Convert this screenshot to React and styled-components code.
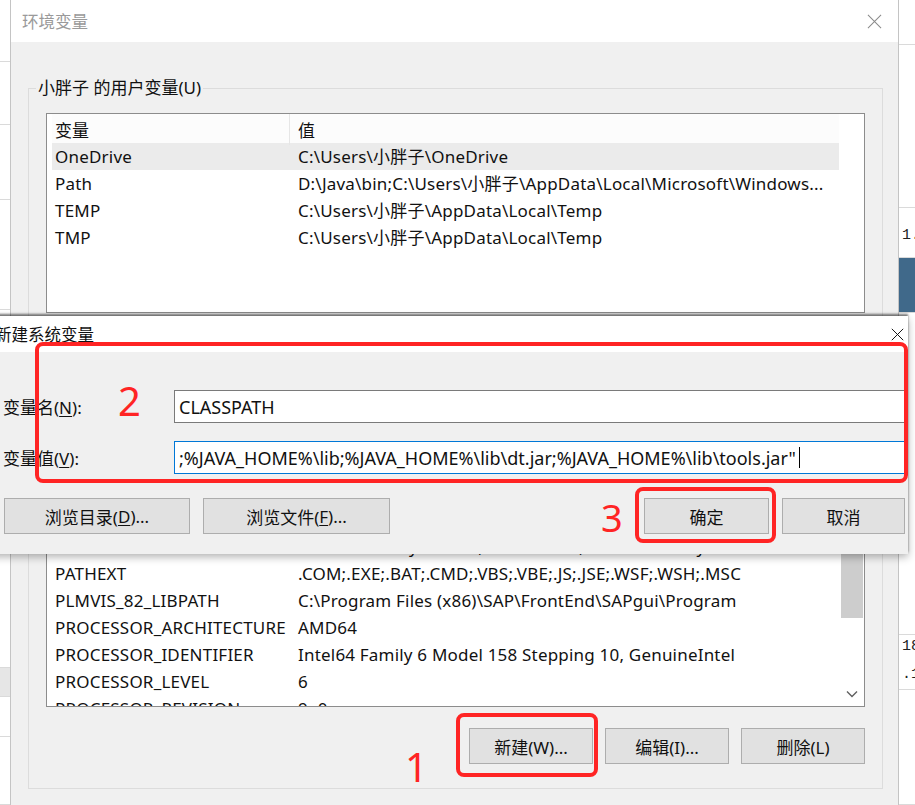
import React from "react";
import styled, { createGlobalStyle } from "styled-components";

const GlobalStyle = createGlobalStyle`
  html, body {
    margin: 0;
    padding: 0;
  }
  body {
    width: 915px;
    height: 805px;
    overflow: hidden;
    background: #fff;
    font-family: "Noto Sans", "Noto Sans CJK SC", sans-serif;
    color: #111;
  }
  * {
    box-sizing: border-box;
  }
`;

// 用户变量 / 系统变量 列表数据
const userVars = [
  { name: "OneDrive", value: "C:\\Users\\小胖子\\OneDrive", selected: true },
  { name: "Path", value: "D:\\Java\\bin;C:\\Users\\小胖子\\AppData\\Local\\Microsoft\\Windows..." },
  { name: "TEMP", value: "C:\\Users\\小胖子\\AppData\\Local\\Temp" },
  { name: "TMP", value: "C:\\Users\\小胖子\\AppData\\Local\\Temp" },
];

const systemVars = [
  { name: "JAVA_HOME", value: "D:\\Java" },
  { name: "NUMBER_OF_PROCESSORS", value: "12" },
  { name: "OS", value: "Windows_NT" },
  { name: "Path", value: "C:\\Windows\\system32;C:\\Windows;C:\\Windows\\System32\\Wbem" },
  { name: "PATHEXT", value: ".COM;.EXE;.BAT;.CMD;.VBS;.VBE;.JS;.JSE;.WSF;.WSH;.MSC" },
  { name: "PLMVIS_82_LIBPATH", value: "C:\\Program Files (x86)\\SAP\\FrontEnd\\SAPgui\\Program" },
  { name: "PROCESSOR_ARCHITECTURE", value: "AMD64" },
  { name: "PROCESSOR_IDENTIFIER", value: "Intel64 Family 6 Model 158 Stepping 10, GenuineIntel" },
  { name: "PROCESSOR_LEVEL", value: "6" },
  { name: "PROCESSOR_REVISION", value: "9e0a" },
];

// 背后那个程序露出来的两条边
const leftBands = [
  { h: 62 }, { h: 63 }, { h: 75 }, { h: 110 }, { h: 358 }, { h: 29, shade: true }, { h: 40 }, { h: 68 },
];

const rightBands = [
  { h: 45 }, { h: 163 }, { h: 50, text: "1.", pad: 18 }, { h: 55, blue: true }, { h: 322 },
  { h: 27, text: "18", pad: 2, bare: true }, { h: 28, text: ".1", pad: 3 }, { h: 115 },
];

const CloseIcon = ({ size, color, weight }) => (
  <svg width={size} height={size} viewBox="0 0 16 16">
    <path d="M1 1 L15 15 M15 1 L1 15" stroke={color} strokeWidth={weight} fill="none" />
  </svg>
);

const ChevronDown = () => (
  <svg width="12" height="8" viewBox="0 0 12 8">
    <path d="M1 1.5 L6 6.5 L11 1.5" stroke="#606060" strokeWidth="1.4" fill="none" />
  </svg>
);

const VarList = ({ rows, height, scroll }) => (
  <ListBox $h={height}>
    <ListBody>
      <HeaderRow>
        <HeaderCell $divider>变量</HeaderCell>
        <HeaderCell>值</HeaderCell>
      </HeaderRow>
      {rows.map((r) => (
        <Row key={r.name + r.value} $selected={r.selected}>
          <Cell>{r.name}</Cell>
          <Cell>{r.value}</Cell>
        </Row>
      ))}
    </ListBody>
    <Gutter>
      {scroll && (
        <>
          <ArrowBox />
          <Track>
            <Thumb $offset={72} $size={98} />
          </Track>
          <ArrowBox>
            <ChevronDown />
          </ArrowBox>
        </>
      )}
    </Gutter>
  </ListBox>
);

const App = () => {
  return (
    <>
      <GlobalStyle />
      <Desktop>
        <Strip $w={10}>
          {leftBands.map((b, i) => (
            <Band key={i} $h={b.h} $shade={b.shade} />
          ))}
        </Strip>
        <Strip $w={16}>
          {rightBands.map((b, i) => (
            <Band key={i} $h={b.h} $blue={b.blue} $pad={b.pad} $bare={b.bare}>
              {b.text}
            </Band>
          ))}
        </Strip>

        <Window>
          <TitleBar $h={42} $left={11} $right={16}>
            <WinTitle $dim>环境变量</WinTitle>
            <CloseIcon size={15} color="#8a8a8a" weight={1.1} />
          </TitleBar>
          <WindowBody>
            <Group>
              <Legend>小胖子 的用户变量(U)</Legend>
              <VarList rows={userVars} height={200} />
              <ButtonRow>
                <Button $w={124}>新建(N)...</Button>
                <Button $w={124}>编辑(E)...</Button>
                <Button $w={124}>删除(D)</Button>
              </ButtonRow>
            </Group>
            <Group $gap={10} $bottom={24}>
              <Legend>系统变量(S)</Legend>
              <VarList rows={systemVars} height={285} scroll />
              <ButtonRow $top={21}>
                <Button $w={124}>新建(W)...</Button>
                <Button $w={124}>编辑(I)...</Button>
                <Button $w={124}>删除(L)</Button>
              </ButtonRow>
            </Group>
          </WindowBody>
        </Window>

        <Dialog>
          <TitleBar $h={36} $left={5} $right={4}>
            <WinTitle>新建系统变量</WinTitle>
            <CloseIcon size={13} color="#111" weight={1.2} />
          </TitleBar>
          <DialogBody>
            <FieldRow>
              <FieldLabel>
                变量名(<u>N</u>):
              </FieldLabel>
              <TextInput>CLASSPATH</TextInput>
            </FieldRow>
            <FieldRow>
              <FieldLabel>
                变量值(<u>V</u>):
              </FieldLabel>
              <TextInput $focused>
                ;%JAVA_HOME%\lib;%JAVA_HOME%\lib\dt.jar;%JAVA_HOME%\lib\tools.jar"
                <Caret />
              </TextInput>
            </FieldRow>
            <DialogButtons>
              <ButtonGroup>
                <Button $w={186}>
                  浏览目录(<u>D</u>)...
                </Button>
                <Button $w={187}>
                  浏览文件(<u>F</u>)...
                </Button>
              </ButtonGroup>
              <ButtonGroup>
                <Button $w={125}>确定</Button>
                <Button $w={123}>取消</Button>
              </ButtonGroup>
            </DialogButtons>
          </DialogBody>
        </Dialog>

        {/* 红色标注 */}
        <Mark $x={35} $y={342} $w={873} $h={141} />
        <Mark $x={635} $y={487} $w={141} $h={56} />
        <Mark $x={456} $y={713} $w={142} $h={64} />
        <StepNo $x={118} $y={377}>2</StepNo>
        <StepNo $x={601} $y={495} $size={38}>3</StepNo>
        <StepNo $x={405} $y={743}>1</StepNo>
      </Desktop>
    </>
  );
};

export default App;

const Desktop = styled.div`
  position: relative;
  width: 915px;
  height: 805px;
  overflow: hidden;
  display: flex;
  justify-content: space-between;
  background: #fff;
`;

const Strip = styled.div`
  width: ${(p) => p.$w}px;
  display: flex;
  flex-direction: column;
`;

const Band = styled.div`
  height: ${(p) => p.$h}px;
  flex: none;
  border-bottom: ${(p) => (p.$bare ? "none" : "1px solid #dadada")};
  background: ${(p) => (p.$blue ? "#40698a" : p.$shade ? "#e6e6e6" : "#fff")};
  padding: ${(p) => p.$pad || 0}px 0 0 3px;
  font-family: "Liberation Mono", monospace;
  font-size: 15px;
  line-height: 20px;
  color: #222;
  white-space: nowrap;
  overflow: hidden;
`;

const Window = styled.section`
  position: absolute;
  left: 10px;
  top: 0;
  width: 889px;
  height: 830px;
  display: flex;
  flex-direction: column;
  background: #f0f0f0;
  border-left: 1px solid #c4c4c4;
  border-right: 1px solid #c4c4c4;
`;

const TitleBar = styled.header`
  height: ${(p) => p.$h}px;
  flex: none;
  display: flex;
  align-items: center;
  justify-content: space-between;
  padding: 0 ${(p) => p.$right}px 0 ${(p) => p.$left}px;
  background: #fff;
`;

const WinTitle = styled.div`
  font-size: 16.5px;
  color: ${(p) => (p.$dim ? "#9a9a9a" : "#111")};
`;

const WindowBody = styled.div`
  flex: 1;
  padding: 35px 15px 0 17px;
`;

const Group = styled.fieldset`
  margin: ${(p) => p.$gap || 0}px 0 0;
  padding: 14px 17px ${(p) => p.$bottom || 12}px 17px;
  border: 1px solid #dcdcdc;
  min-width: 0;
`;

const Legend = styled.legend`
  margin-left: -10px;
  padding: 0 2px;
  font-size: 17px;
  line-height: 22px;
  color: #111;
`;

const ListBox = styled.div`
  height: ${(p) => p.$h}px;
  display: flex;
  border: 1px solid #8c8c8c;
  background: #fff;
  overflow: hidden;
`;

const ListBody = styled.div`
  flex: 1;
  min-width: 0;
  padding-left: 5px;
`;

const HeaderRow = styled.div`
  display: grid;
  grid-template-columns: 238px 1fr;
  column-gap: 5px;
  height: 29px;
  background: #fcfcfc;
  font-size: 17px;
  line-height: 29px;
`;

const HeaderCell = styled.div`
  padding: 2px 0 0 3px;
  border-right: ${(p) => (p.$divider ? "1px solid #e6e6e6" : "none")};
`;

const Row = styled.div`
  display: grid;
  grid-template-columns: 238px 1fr;
  column-gap: 5px;
  height: 27px;
  align-items: center;
  background: ${(p) => (p.$selected ? "#ebebeb" : "transparent")};
  font-size: 17px;
  letter-spacing: 0.2px;
  line-height: 27px;
`;

const Cell = styled.div`
  padding-left: 3px;
  white-space: nowrap;
  overflow: hidden;
`;

const Gutter = styled.div`
  width: 25px;
  flex: none;
  display: flex;
  flex-direction: column;
`;

const ArrowBox = styled.div`
  height: 25px;
  flex: none;
  display: flex;
  align-items: center;
  justify-content: center;
`;

const Track = styled.div`
  flex: 1;
  display: flex;
  flex-direction: column;
  align-items: center;
`;

const Thumb = styled.div`
  margin-top: ${(p) => p.$offset}px;
  width: 22px;
  height: ${(p) => p.$size}px;
  background: #cdcdcd;
`;

const ButtonRow = styled.div`
  display: flex;
  justify-content: flex-end;
  gap: 12px;
  margin-top: ${(p) => p.$top || 14}px;
`;

const Button = styled.div`
  width: ${(p) => p.$w}px;
  height: 36px;
  display: flex;
  align-items: center;
  justify-content: center;
  background: #e1e1e1;
  border: 1px solid #adadad;
  font-size: 17px;
  color: #111;
  white-space: nowrap;

  u {
    text-underline-offset: 2px;
  }
`;

const Dialog = styled.section`
  position: absolute;
  left: -10px;
  top: 316px;
  width: 918px;
  height: 238px;
  display: flex;
  flex-direction: column;
  background: #f0f0f0;
  box-shadow: 0 -2px 2px rgba(0, 0, 0, 0.5), 0 3px 8px rgba(0, 0, 0, 0.3);
`;

const DialogBody = styled.div`
  flex: 1;
  padding: 38px 3px 0 13px;
  display: flex;
  flex-direction: column;
  gap: 18px;
`;

const FieldRow = styled.div`
  display: flex;
  align-items: center;
  height: 33px;
`;

const FieldLabel = styled.div`
  width: 171px;
  flex: none;
  font-size: 17px;
  u {
    text-underline-offset: 2px;
  }
`;

const TextInput = styled.div`
  flex: 1;
  height: 33px;
  display: flex;
  align-items: center;
  padding-left: 4px;
  background: #fff;
  border: 1px solid ${(p) => (p.$focused ? "#0078d7" : "#7a7a7a")};
  font-size: 18px;
  white-space: nowrap;
  overflow: hidden;
`;

const Caret = styled.span`
  display: inline-block;
  width: 1px;
  height: 21px;
  margin-left: 3px;
  background: #000;
`;

const DialogButtons = styled.div`
  display: flex;
  justify-content: space-between;
  margin-top: 6px;
  padding-left: 1px;
`;

const ButtonGroup = styled.div`
  display: flex;
  gap: 13px;
`;

const Mark = styled.div`
  position: absolute;
  left: ${(p) => p.$x}px;
  top: ${(p) => p.$y}px;
  width: ${(p) => p.$w}px;
  height: ${(p) => p.$h}px;
  border: 4px solid #ff2424;
  border-radius: 8px;
  pointer-events: none;
`;

const StepNo = styled.div`
  position: absolute;
  left: ${(p) => p.$x}px;
  top: ${(p) => p.$y}px;
  font-family: "Noto Sans", sans-serif;
  font-size: ${(p) => p.$size || 40}px;
  line-height: 1.2;
  color: #ff2424;
`;
